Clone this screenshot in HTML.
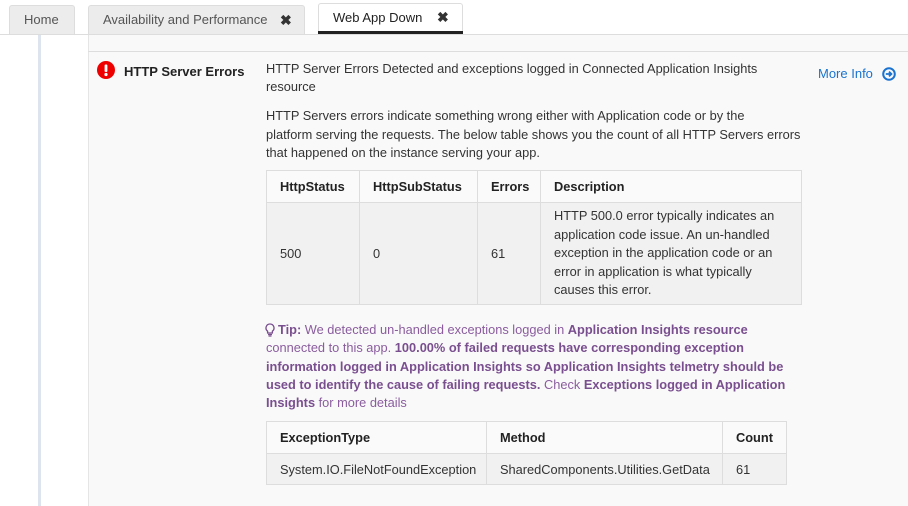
<!DOCTYPE html>
<html><head><style>
*{margin:0;padding:0;box-sizing:border-box}
body{width:908px;height:506px;overflow:hidden;background:#fff;font-family:"Liberation Sans",sans-serif;font-size:12.8px;color:#333;position:relative}
.a{position:absolute;white-space:nowrap}
.tab{position:absolute;background:#ececec;border:1px solid #ddd;border-bottom:none;border-radius:3px 3px 0 0;color:#555;font-size:13px;line-height:28px;padding-left:14px}
.x{font-weight:bold;color:#333;position:absolute;font-size:14px}
table{border-collapse:collapse;position:absolute;table-layout:fixed}
td,th{border:1px solid #ddd;padding:0 13px;text-align:left;vertical-align:middle;white-space:nowrap;overflow:hidden}
th{background:#fafafa;font-weight:bold;color:#222;height:32px}
td{background:#f1f1f1}
.p{color:#8a5c9e}
.p b{color:#7a4f8f}
</style></head><body>
<div class="tab" style="left:9px;top:5px;width:66px;height:29px">Home</div>
<div class="tab" style="left:88px;top:5px;width:217px;height:29px">Availability and Performance<span class="x" style="left:191px;top:0">✖</span></div>
<div class="tab" style="left:318px;top:3px;width:145px;height:31px;background:#fff;color:#222;line-height:27px">Web App Down<span class="x" style="left:118px;top:0">✖</span></div>
<div class="a" style="left:318px;top:31px;width:145px;height:3px;background:#222"></div>
<div class="a" style="left:0;top:34px;width:908px;height:1px;background:#ddd"></div>
<div class="a" style="left:38px;top:35px;width:3px;height:471px;background:#dde4ee"></div>
<div class="a" style="left:88px;top:35px;width:820px;height:471px;background:#f9f9f9;border-left:1px solid #e5e5e5"></div>
<div class="a" style="left:88px;top:51px;width:820px;height:1px;background:#ddd"></div>
<svg class="a" style="left:97px;top:61px" width="18" height="18" viewBox="0 0 18 18"><circle cx="9" cy="9" r="9" fill="#e00"/><rect x="7.6" y="3.5" width="2.8" height="7.5" rx="1" fill="#fff"/><circle cx="9" cy="13.5" r="1.6" fill="#fff"/></svg>
<div class="a" style="left:124px;top:64px;font-weight:bold;color:#222;font-size:13px">HTTP Server Errors</div>
<div class="a" style="left:266px;top:60px;line-height:18px">HTTP Server Errors Detected and exceptions logged in Connected Application Insights<br>resource</div>
<div class="a" style="left:818px;top:66px;color:#1a73d0;font-size:13px">More Info</div>
<svg class="a" style="left:882px;top:67px" width="14" height="14" viewBox="0 0 14 14"><circle cx="7" cy="7" r="5.8" fill="none" stroke="#1a73d0" stroke-width="2"/><path d="M3.8 7h5M7 4.6L9.4 7 7 9.4" fill="none" stroke="#1a73d0" stroke-width="1.8"/></svg>
<div class="a" style="left:266px;top:107px;line-height:18.5px">HTTP Servers errors indicate something wrong either with Application code or by the<br>platform serving the requests. The below table shows you the count of all HTTP Servers errors<br>that happened on the instance serving your app.</div>
<table style="left:266px;top:170px;width:536px">
<col style="width:93px"><col style="width:118px"><col style="width:63px"><col>
<tr><th>HttpStatus</th><th>HttpSubStatus</th><th>Errors</th><th>Description</th></tr>
<tr><td style="height:102px">500</td><td>0</td><td>61</td><td style="line-height:18.5px">HTTP 500.0 error typically indicates an<br>application code issue. An un-handled<br>exception in the application code or an<br>error in application is what typically<br>causes this error.</td></tr>
</table>
<svg class="a" style="left:265px;top:323px" width="10" height="14" viewBox="0 0 10 14"><path d="M5 1a4 4 0 0 0-2.4 7.2V10h4.8V8.2A4 4 0 0 0 5 1z" fill="none" stroke="#7a4f8f" stroke-width="1.3"/><path d="M3 11.5h4M3.5 13h3" stroke="#7a4f8f" stroke-width="1.2"/></svg>
<div class="a p" style="left:266px;top:321px;line-height:18.3px"><b style="margin-left:12px">Tip:</b> We detected un-handled exceptions logged in <b>Application Insights resource</b><br>connected to this app. <b>100.00% of failed requests have corresponding exception<br>information logged in Application Insights so Application Insights telmetry should be<br>used to identify the cause of failing requests.</b> Check <b>Exceptions logged in Application<br>Insights</b> for more details</div>
<table style="left:266px;top:421px;width:521px">
<col style="width:220px"><col style="width:236px"><col>
<tr><th>ExceptionType</th><th>Method</th><th>Count</th></tr>
<tr><td style="height:31px">System.IO.FileNotFoundException</td><td>SharedComponents.Utilities.GetData</td><td>61</td></tr>
</table>
</body></html>
